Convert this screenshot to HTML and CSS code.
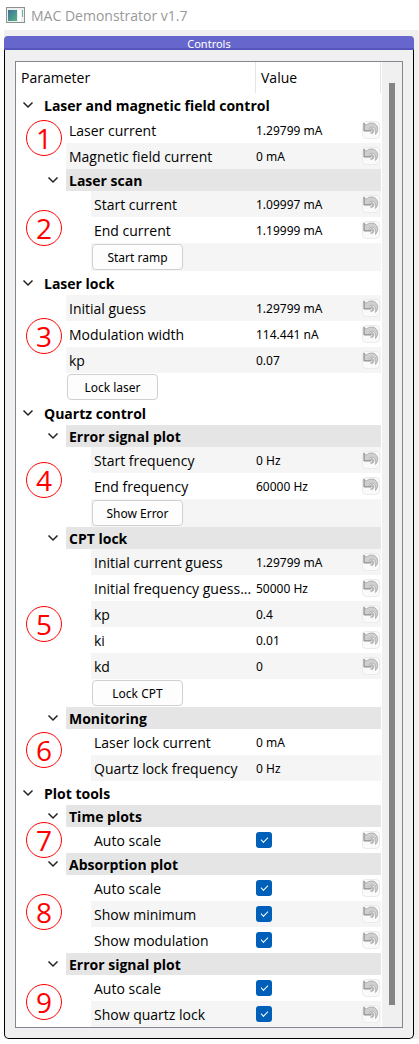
FILE: index.html
```html
<!DOCTYPE html>
<html lang="en">
<head>
<meta charset="utf-8">
<meta name="viewport" content="width=device-width, initial-scale=1">
<title>MAC Demonstrator v1.7</title>
<link rel="stylesheet" href="styles.css">
</head>
<body>
<svg class="symbols" aria-hidden="true">
  <symbol id="chevron" viewBox="0 0 12 8"><path d="M1.5 1.5 L6 6 L10.5 1.5" fill="none" stroke="#222" stroke-width="1.5"/></symbol>
  <symbol id="undo" viewBox="0 0 18 18">
    <path d="M1 1 L3.500 3.500 C7 .500 12 .300 14.500 3 C17.500 6 17 11 14 14 C15 10 14 7 11.500 6 C9.500 5.500 8 6 7 7.500 L9 10 L1 10 Z" fill="#cfcfcf" stroke="#9c9c9c" stroke-width=".8"/>
    <path d="M8 8 C11 6 13 8.500 12 11 C11.500 12.800 9.500 13.500 8.500 12.500 C10.500 12 11 10.500 9.500 9.500" fill="#bdbdbd" stroke="#a2a2a2" stroke-width=".8"/>
    <path d="M1.300 1.500 V10 H9" fill="none" stroke="#8e8e8e"/>
  </symbol>
</svg>

<header class="titlebar">
  <svg class="app-icon" viewBox="0 0 19 16" aria-hidden="true">
    <defs><linearGradient id="screen" x2="1" y2="1"><stop offset="0" stop-color="#3f709c"/><stop offset="1" stop-color="#55b585"/></linearGradient></defs>
    <rect x=".5" y=".5" width="18" height="15" fill="#eef0f0" stroke="#8c9292"/>
    <rect x="2" y="3" width="9" height="11" fill="url(#screen)"/>
    <rect x="12" y="3" width="3" height="11" fill="#fff"/>
    <rect x="16" y="3" width="1" height="7" fill="#6bb59b"/>
  </svg>
  <h1>MAC Demonstrator v1.7</h1>
</header>

<main class="window">
<section class="dock">
<h2 class="dock-title">Controls</h2>
<div class="dock-body">
<div class="tree">
<table>
<colgroup><col class="col-name"><col></colgroup>
<thead><tr><th>Parameter</th><th>Value</th></tr></thead>
<tbody>
<tr class="group"><td colspan="2"><div class="name"><button class="toggle" aria-label="Collapse"><svg><use href="#chevron"/></svg></button><span class="label">Laser and magnetic field control</span></div></td></tr>
<tr class="item"><td><div class="name"><span class="label">Laser current</span></div></td><td><div class="value"><span>1.29799 mA</span><button class="reset" aria-label="Reset"><svg><use href="#undo"/></svg></button></div></td></tr>
<tr class="item alt"><td><div class="name"><span class="label">Magnetic field current</span></div></td><td><div class="value"><span>0 mA</span><button class="reset" aria-label="Reset"><svg><use href="#undo"/></svg></button></div></td></tr>
<tr class="subgroup"><td colspan="2"><div class="name"><button class="toggle" aria-label="Collapse"><svg><use href="#chevron"/></svg></button><span class="label">Laser scan</span></div></td></tr>
<tr class="item deep alt"><td><div class="name"><span class="label">Start current</span></div></td><td><div class="value"><span>1.09997 mA</span><button class="reset" aria-label="Reset"><svg><use href="#undo"/></svg></button></div></td></tr>
<tr class="item deep"><td><div class="name"><span class="label">End current</span></div></td><td><div class="value"><span>1.19999 mA</span><button class="reset" aria-label="Reset"><svg><use href="#undo"/></svg></button></div></td></tr>
<tr class="action deep alt"><td colspan="2"><div class="name"><span class="label"><button class="push">Start ramp</button></span></div></td></tr>

<tr class="group"><td colspan="2"><div class="name"><button class="toggle" aria-label="Collapse"><svg><use href="#chevron"/></svg></button><span class="label">Laser lock</span></div></td></tr>
<tr class="item alt"><td><div class="name"><span class="label">Initial guess</span></div></td><td><div class="value"><span>1.29799 mA</span><button class="reset" aria-label="Reset"><svg><use href="#undo"/></svg></button></div></td></tr>
<tr class="item"><td><div class="name"><span class="label">Modulation width</span></div></td><td><div class="value"><span>114.441 nA</span><button class="reset" aria-label="Reset"><svg><use href="#undo"/></svg></button></div></td></tr>
<tr class="item alt"><td><div class="name"><span class="label">kp</span></div></td><td><div class="value"><span>0.07</span><button class="reset" aria-label="Reset"><svg><use href="#undo"/></svg></button></div></td></tr>
<tr class="action"><td colspan="2"><div class="name"><span class="label"><button class="push">Lock laser</button></span></div></td></tr>

<tr class="group"><td colspan="2"><div class="name"><button class="toggle" aria-label="Collapse"><svg><use href="#chevron"/></svg></button><span class="label">Quartz control</span></div></td></tr>
<tr class="subgroup"><td colspan="2"><div class="name"><button class="toggle" aria-label="Collapse"><svg><use href="#chevron"/></svg></button><span class="label">Error signal plot</span></div></td></tr>
<tr class="item deep alt"><td><div class="name"><span class="label">Start frequency</span></div></td><td><div class="value"><span>0 Hz</span><button class="reset" aria-label="Reset"><svg><use href="#undo"/></svg></button></div></td></tr>
<tr class="item deep"><td><div class="name"><span class="label">End frequency</span></div></td><td><div class="value"><span>60000 Hz</span><button class="reset" aria-label="Reset"><svg><use href="#undo"/></svg></button></div></td></tr>
<tr class="action deep alt"><td colspan="2"><div class="name"><span class="label"><button class="push">Show Error</button></span></div></td></tr>
<tr class="subgroup"><td colspan="2"><div class="name"><button class="toggle" aria-label="Collapse"><svg><use href="#chevron"/></svg></button><span class="label">CPT lock</span></div></td></tr>
<tr class="item deep alt"><td><div class="name"><span class="label">Initial current guess</span></div></td><td><div class="value"><span>1.29799 mA</span><button class="reset" aria-label="Reset"><svg><use href="#undo"/></svg></button></div></td></tr>
<tr class="item deep"><td><div class="name"><span class="label">Initial frequency guess...</span></div></td><td><div class="value"><span>50000 Hz</span><button class="reset" aria-label="Reset"><svg><use href="#undo"/></svg></button></div></td></tr>
<tr class="item deep alt"><td><div class="name"><span class="label">kp</span></div></td><td><div class="value"><span>0.4</span><button class="reset" aria-label="Reset"><svg><use href="#undo"/></svg></button></div></td></tr>
<tr class="item deep"><td><div class="name"><span class="label">ki</span></div></td><td><div class="value"><span>0.01</span><button class="reset" aria-label="Reset"><svg><use href="#undo"/></svg></button></div></td></tr>
<tr class="item deep alt"><td><div class="name"><span class="label">kd</span></div></td><td><div class="value"><span>0</span><button class="reset" aria-label="Reset"><svg><use href="#undo"/></svg></button></div></td></tr>
<tr class="action deep"><td colspan="2"><div class="name"><span class="label"><button class="push">Lock CPT</button></span></div></td></tr>
<tr class="subgroup"><td colspan="2"><div class="name"><button class="toggle" aria-label="Collapse"><svg><use href="#chevron"/></svg></button><span class="label">Monitoring</span></div></td></tr>
<tr class="item deep"><td><div class="name"><span class="label">Laser lock current</span></div></td><td><div class="value"><span>0 mA</span></div></td></tr>
<tr class="item deep alt"><td><div class="name"><span class="label">Quartz lock frequency</span></div></td><td><div class="value"><span>0 Hz</span></div></td></tr>

<tr class="group"><td colspan="2"><div class="name"><button class="toggle" aria-label="Collapse"><svg><use href="#chevron"/></svg></button><span class="label">Plot tools</span></div></td></tr>
<tr class="subgroup"><td colspan="2"><div class="name"><button class="toggle" aria-label="Collapse"><svg><use href="#chevron"/></svg></button><span class="label">Time plots</span></div></td></tr>
<tr class="item deep"><td><div class="name"><label class="label" for="time-auto">Auto scale</label></div></td><td><div class="value"><input type="checkbox" id="time-auto" checked><button class="reset" aria-label="Reset"><svg><use href="#undo"/></svg></button></div></td></tr>
<tr class="subgroup"><td colspan="2"><div class="name"><button class="toggle" aria-label="Collapse"><svg><use href="#chevron"/></svg></button><span class="label">Absorption plot</span></div></td></tr>
<tr class="item deep"><td><div class="name"><label class="label" for="abs-auto">Auto scale</label></div></td><td><div class="value"><input type="checkbox" id="abs-auto" checked><button class="reset" aria-label="Reset"><svg><use href="#undo"/></svg></button></div></td></tr>
<tr class="item deep alt"><td><div class="name"><label class="label" for="abs-min">Show minimum</label></div></td><td><div class="value"><input type="checkbox" id="abs-min" checked><button class="reset" aria-label="Reset"><svg><use href="#undo"/></svg></button></div></td></tr>
<tr class="item deep"><td><div class="name"><label class="label" for="abs-mod">Show modulation</label></div></td><td><div class="value"><input type="checkbox" id="abs-mod" checked><button class="reset" aria-label="Reset"><svg><use href="#undo"/></svg></button></div></td></tr>
<tr class="subgroup"><td colspan="2"><div class="name"><button class="toggle" aria-label="Collapse"><svg><use href="#chevron"/></svg></button><span class="label">Error signal plot</span></div></td></tr>
<tr class="item deep"><td><div class="name"><label class="label" for="err-auto">Auto scale</label></div></td><td><div class="value"><input type="checkbox" id="err-auto" checked><button class="reset" aria-label="Reset"><svg><use href="#undo"/></svg></button></div></td></tr>
<tr class="item deep alt"><td><div class="name"><label class="label" for="err-lock">Show quartz lock</label></div></td><td><div class="value"><input type="checkbox" id="err-lock" checked><button class="reset" aria-label="Reset"><svg><use href="#undo"/></svg></button></div></td></tr>
</tbody>
</table>
<div class="scrollbar"><div class="thumb"></div></div>
<span class="mark m1">1</span>
<span class="mark m2">2</span>
<span class="mark m3">3</span>
<span class="mark m4">4</span>
<span class="mark m5">5</span>
<span class="mark m6">6</span>
<span class="mark m7">7</span>
<span class="mark m8">8</span>
<span class="mark m9">9</span>
</div>
</div>
</section>
</main>
</body>
</html>
```
FILE: styles.css
```css
* { box-sizing: border-box; }

body {
  margin: 0;
  background: #fff;
  color: #000;
  font: 14px/20px "Open Sans", "Noto Sans", sans-serif;
}

button { font: inherit; color: inherit; padding: 0; }

.symbols { display: none; }

.titlebar {
  display: flex;
  align-items: center;
  gap: 6px;
  height: 30px;
  padding-left: 6px;
}

.app-icon { width: 19px; height: 16px; }

.titlebar h1 {
  margin: 0;
  padding-top: 1px;
  font-size: 14px;
  font-weight: 400;
  color: #999;
}

.window {
  margin-left: 4px;
  padding: 6px 5px 0 0;
  background: #f0f0f0;
}

.dock-title {
  height: 14px;
  margin: 0;
  border-bottom: 2px solid #5555bb;
  border-radius: 4px 4px 0 0;
  background: #6666cc;
  color: #fff;
  font: 11px/15px "Noto Sans", sans-serif;
  text-align: center;
}

.dock-body {
  padding: 11px 10px 10px;
  border: 1px solid #000;
  border-top: 0;
  border-radius: 0 0 5px 5px;
}

.tree {
  position: relative;
  display: flex;
  border: 1px solid #828790;
  background: #fff;
}

table {
  flex: 1;
  min-width: 0;
  border-spacing: 0;
  table-layout: fixed;
}

.col-name { width: 240px; }

td, th { padding: 0; }

thead tr { height: 31px; }

th {
  border-right: 1px solid #e5e5e5;
  padding-left: 5px;
  font-weight: 400;
  text-align: left;
}

.name { display: flex; height: 26px; }

.label {
  flex: 1;
  padding: 2px 0 0 3px;
  line-height: 24px;
  white-space: nowrap;
}

.item .name, .action .name { padding-left: 50px; }
.deep.item .name, .deep.action .name { padding-left: 75px; }

.alt .label, .alt .value { background: #f5f5f5; }

.group .name { height: 24px; padding-left: 5px; }
.group .label { line-height: 22px; padding-left: 6px; font-weight: 700; }

.subgroup .name { height: 22px; padding-left: 30px; }
.subgroup .label { line-height: 20px; background: #e5e5e5; font-weight: 700; }
.subgroup .toggle { width: 20px; padding-right: 6px; }

.action .name { height: 28px; }
.action .label { display: flex; align-items: center; padding: 0 0 0 1px; }

.toggle {
  display: flex;
  align-items: center;
  justify-content: center;
  width: 17px;
  padding-right: 4px;
  border: 0;
  background: none;
}

.toggle svg { width: 12px; height: 8px; flex: none; }

.value {
  display: flex;
  align-items: center;
  justify-content: space-between;
  height: 26px;
  padding-right: 1px;
  font: 12px/24px "Noto Sans", sans-serif;
}

.value span { padding-top: 2px; }

.reset {
  width: 18px;
  height: 18px;
  border: 1px solid #ebebeb;
  border-radius: 4px;
  background: #fafafa;
}

.reset svg { display: block; width: 16px; height: 16px; }

.push {
  width: 91px;
  height: 26px;
  padding-top: 2px;
  border: 1px solid #d0d0d0;
  border-radius: 4px;
  background: #fdfdfd;
  font: 12px/20px "Noto Sans", sans-serif;
}

input[type="checkbox"] {
  appearance: none;
  width: 16px;
  height: 16px;
  margin: 0;
  border-radius: 3px;
  background: #005fb8;
  display: grid;
  place-items: center;
}

input[type="checkbox"]:checked::before {
  content: "";
  width: 6px;
  height: 3px;
  margin-top: -2px;
  border: solid #fff;
  border-width: 0 0 1px 1px;
  transform: rotate(-45deg);
}

.scrollbar {
  width: 20px;
  padding: 21px 7px 22px;
  margin-left: 1px;
  background: #f0f0f0;
}

.thumb { height: 100%; background: #858585; }

.mark {
  position: absolute;
  left: 10px;
  width: 36px;
  height: 36px;
  border: 1px solid #f00;
  border-radius: 50%;
  color: #f00;
  font-size: 28px;
  line-height: 34px;
  text-align: center;
}

.m1 { top: 58px; }
.m2 { top: 148px; }
.m3 { top: 256px; }
.m4 { top: 400px; }
.m5 { top: 544px; }
.m6 { top: 670px; }
.m7 { top: 760px; }
.m8 { top: 832px; }
.m9 { top: 922px; }
```
